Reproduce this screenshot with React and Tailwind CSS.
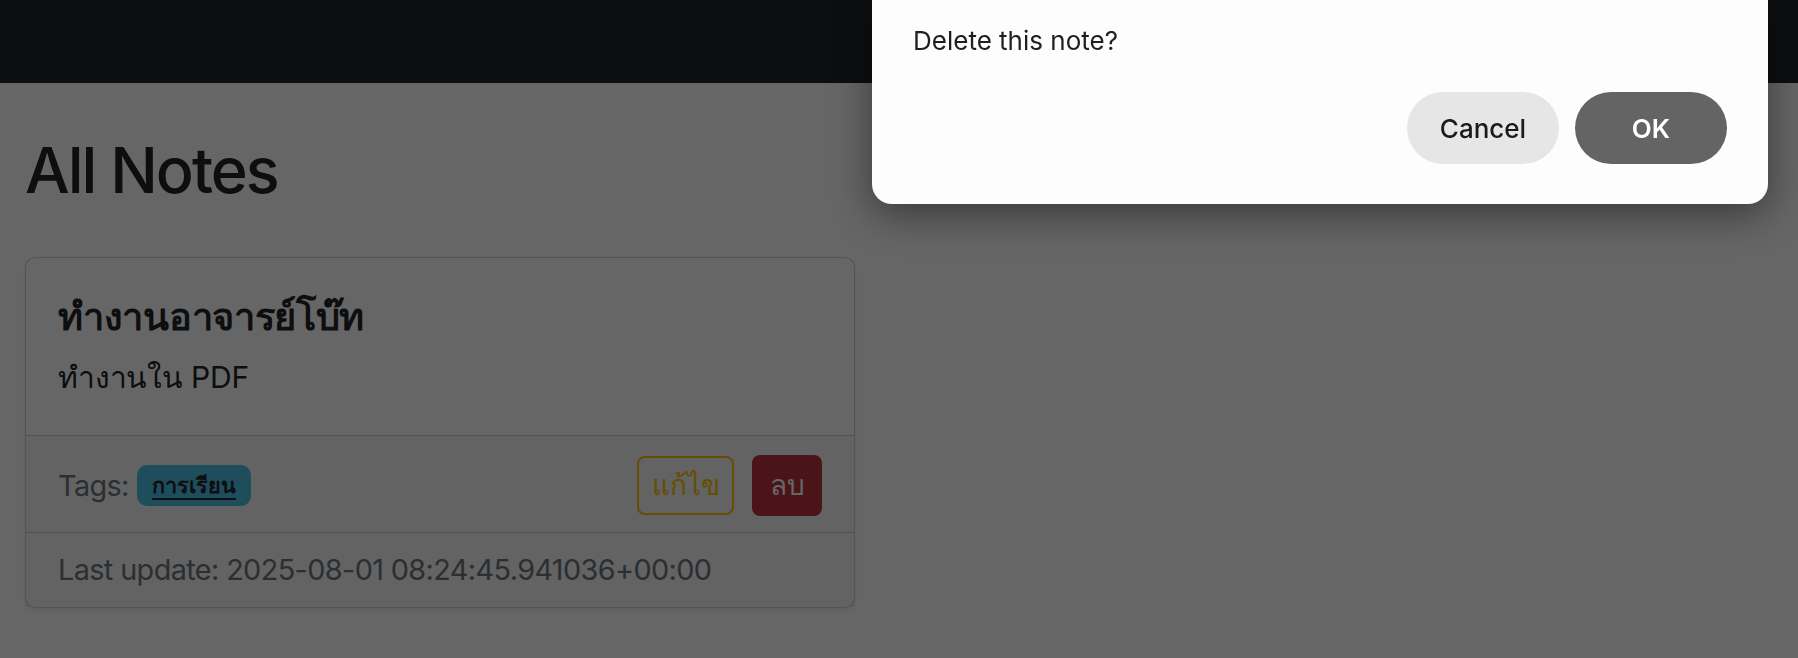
import React from "react";

const App = () => {
  return (
    <div className="relative min-h-screen overflow-hidden bg-white font-['Inter','Noto_Sans',sans-serif] text-[#212529]">
      <nav className="h-[83px] bg-[#212529]" />

      <main className="px-[25px]">
        <h1 className="mt-[50px] text-[63px] font-medium leading-[1.2] tracking-[-2px]">
          All Notes
        </h1>

        <div className="mt-[48px] w-[830px] rounded-[10px] border border-black/[.175] bg-white shadow-[0_2px_4px_rgba(0,0,0,0.08)]">
          <div className="h-[177px] px-[32px] pt-[36px]">
            <h5 className="text-[38px] font-bold leading-[45px] tracking-[-0.3px]">
              ทำงานอาจารย์โบ๊ท
            </h5>
            <p className="mt-[17px] text-[30px] leading-[43px] tracking-[-0.2px]">ทำงานใน PDF</p>
          </div>

          <div className="flex h-[97px] items-center justify-between border-t border-black/[.175] bg-black/[.03] px-[32px] pt-[3px]">
            <div className="flex items-center gap-[8px] text-[28.8px] tracking-[-0.6px] text-[#6c757d]">
              <span>Tags:</span>
              <span className="flex h-[41px] items-center rounded-[10px] bg-[#4cc0e6] px-[15px] text-[21.6px] font-bold tracking-normal text-[#212529] underline underline-offset-[5px]">
                การเรียน
              </span>
            </div>
            <div className="flex items-center gap-[18px]">
              <button className="flex h-[59px] w-[97px] items-center justify-center rounded-[8px] border-2 border-[#ffc107] text-[28px] text-[#ffc107]">
                แก้ไข
              </button>
              <button className="flex h-[61px] w-[70px] items-center justify-center rounded-[8px] bg-[#b8323d] text-[28px] text-white">
                ลบ
              </button>
            </div>
          </div>

          <div className="flex h-[75px] items-center border-t border-black/[.175] bg-black/[.03] px-[32px] text-[28.8px] tracking-[-0.6px] text-[#6c757d]">
            Last update: 2025-08-01 08:24:45.941036+00:00
          </div>
        </div>
      </main>

      <div className="fixed inset-0 bg-black/60" />

      <div className="absolute left-[872px] top-0 w-[896px] rounded-b-[20px] bg-[#fdfdfd] px-[41px] pb-[40px] pt-[26px] shadow-[0_10px_40px_rgba(0,0,0,0.45)]">
        <p className="text-[26px] leading-[30px] text-[#1f1f1f]">Delete this note?</p>
        <div className="mt-[36px] flex justify-end gap-[16px]">
          <button className="h-[72px] w-[152px] rounded-full bg-[#e6e6e6] text-[26px] font-medium text-[#1a1a1a]">
            Cancel
          </button>
          <button className="h-[72px] w-[152px] rounded-full bg-[#646464] text-[26px] font-semibold text-white">
            OK
          </button>
        </div>
      </div>
    </div>
  );
};

export default App;
